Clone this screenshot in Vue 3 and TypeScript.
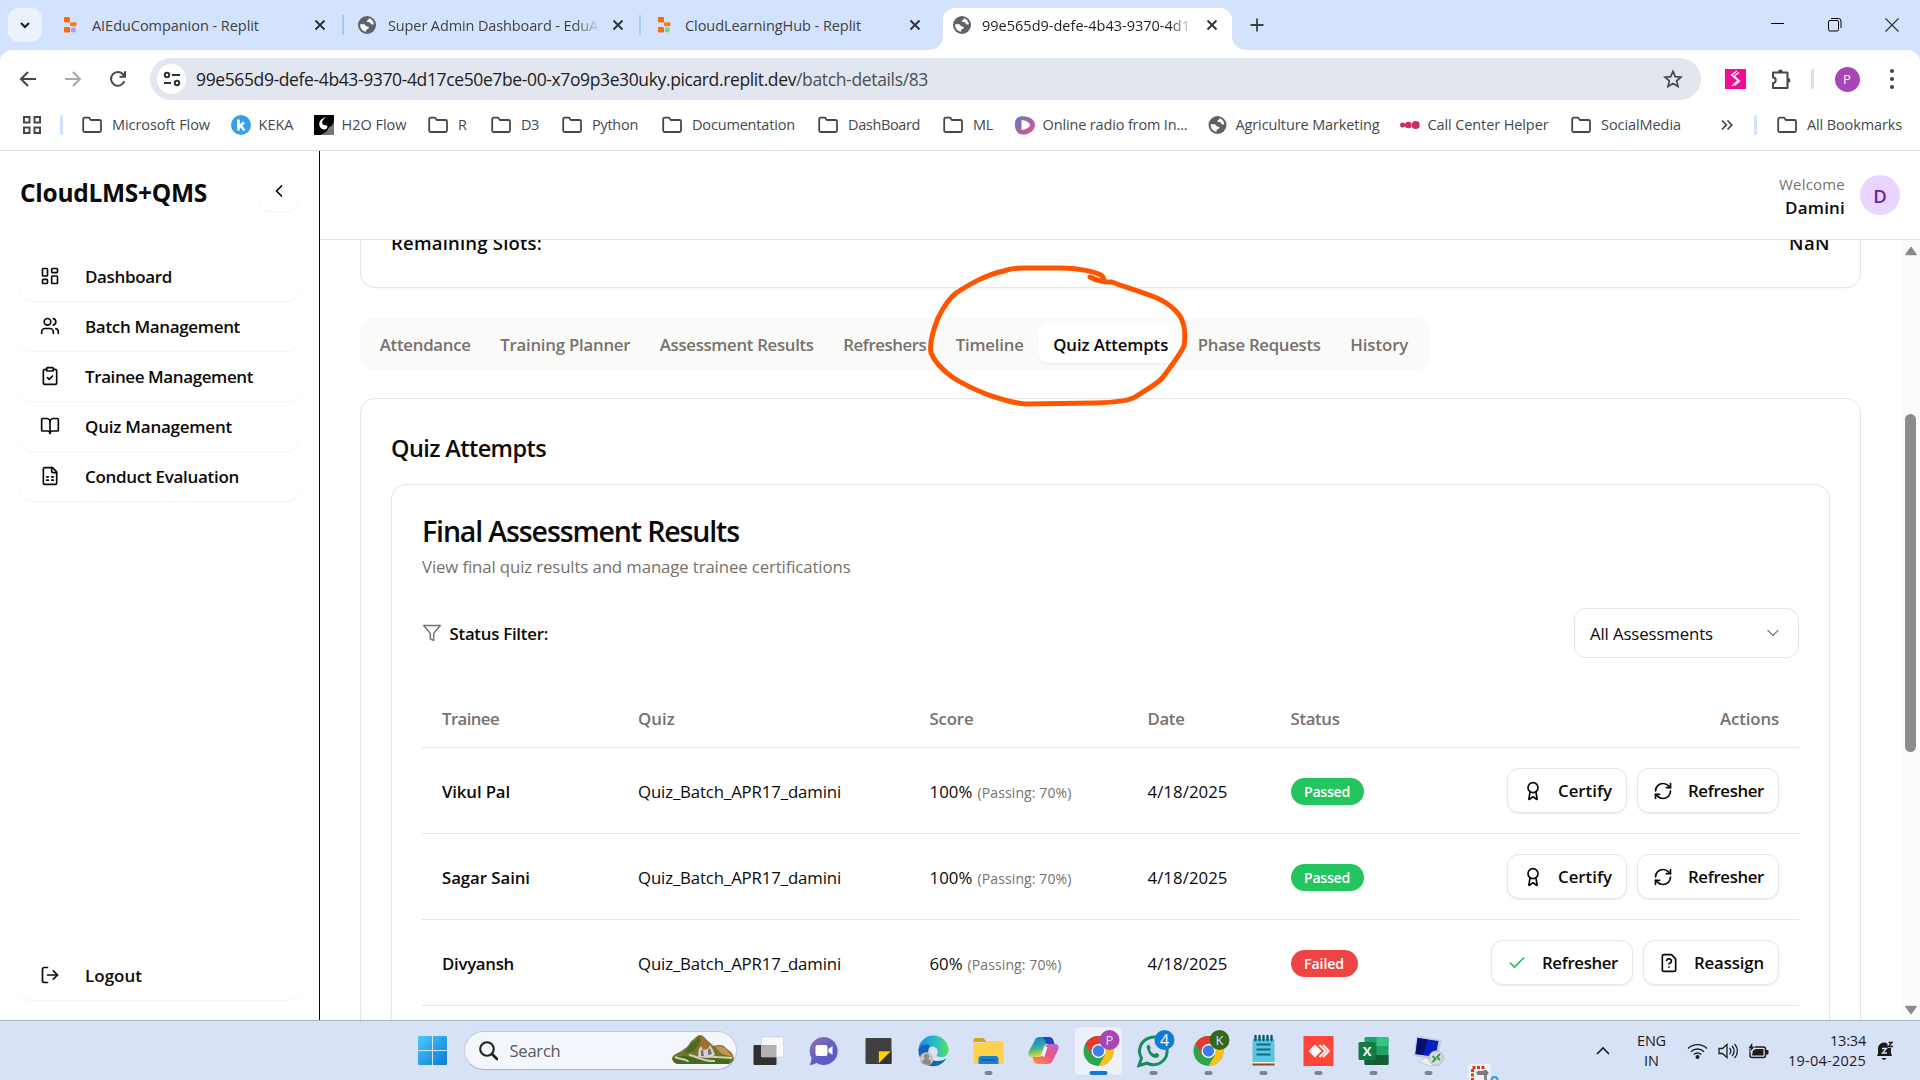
<script setup lang="ts">
import type { Directive } from 'vue'

// Spreads or tightens a label so that it occupies the given width in pixels.
const vFit: Directive<HTMLElement, number> = {
  mounted(el, { value }) {
    const count = (el.textContent ?? '').length
    if (!count || !value) return
    const natural = el.getBoundingClientRect().width
    el.style.letterSpacing = `${((value - natural) / count).toFixed(3)}px`
  },
}

interface BrowserTab { title: string; icon: 'replit' | 'globe'; dot?: string; fit: number; kind: string; fade?: boolean }
const browserTabs: BrowserTab[] = [
  { title: 'AIEduCompanion - Replit', icon: 'replit', dot: '#b79cf7', fit: 167, kind: 'first' },
  { title: 'Super Admin Dashboard - EduA', icon: 'globe', fit: 210, kind: 'second', fade: true },
  { title: 'CloudLearningHub - Replit', icon: 'replit', dot: '#6fd98a', fit: 176, kind: 'third' },
  { title: '99e565d9-defe-4b43-9370-4d1', icon: 'globe', fit: 208, kind: 'active', fade: true },
]

interface Bookmark { label: string; icon: 'folder' | 'keka' | 'h2o' | 'radio' | 'globe' | 'dots'; fit: number; slot: number }
const bookmarks: Bookmark[] = [
  { label: 'Microsoft Flow', icon: 'folder', fit: 98, slot: 149 },
  { label: 'KEKA', icon: 'keka', fit: 35, slot: 83 },
  { label: 'H2O Flow', icon: 'h2o', fit: 65, slot: 114 },
  { label: 'R', icon: 'folder', fit: 9, slot: 63 },
  { label: 'D3', icon: 'folder', fit: 18, slot: 71 },
  { label: 'Python', icon: 'folder', fit: 46, slot: 100 },
  { label: 'Documentation', icon: 'folder', fit: 103, slot: 156 },
  { label: 'DashBoard', icon: 'folder', fit: 72, slot: 125 },
  { label: 'ML', icon: 'folder', fit: 20, slot: 72 },
  { label: 'Online radio from In...', icon: 'radio', fit: 145, slot: 193 },
  { label: 'Agriculture Marketing', icon: 'globe', fit: 144, slot: 192 },
  { label: 'Call Center Helper', icon: 'dots', fit: 121, slot: 171 },
  { label: 'SocialMedia', icon: 'folder', fit: 80, slot: 150 },
]

const glyphs: Record<string, string[]> = {
  dashboard: ['M4 3h4a1 1 0 0 1 1 1v7a1 1 0 0 1-1 1H4a1 1 0 0 1-1-1V4a1 1 0 0 1 1-1z', 'M15 3h5a1 1 0 0 1 1 1v3a1 1 0 0 1-1 1h-5a1 1 0 0 1-1-1V4a1 1 0 0 1 1-1z', 'M15 12h5a1 1 0 0 1 1 1v7a1 1 0 0 1-1 1h-5a1 1 0 0 1-1-1v-7a1 1 0 0 1 1-1z', 'M4 16h4a1 1 0 0 1 1 1v3a1 1 0 0 1-1 1H4a1 1 0 0 1-1-1v-3a1 1 0 0 1 1-1z'],
  users: ['M16 21v-2a4 4 0 0 0-4-4H6a4 4 0 0 0-4 4v2', 'M9 3a4 4 0 1 0 0 8a4 4 0 1 0 0-8', 'M22 21v-2a4 4 0 0 0-3-3.87', 'M16 3.13a4 4 0 0 1 0 7.75'],
  clipboard: ['M9 2h6a1 1 0 0 1 1 1v2a1 1 0 0 1-1 1H9a1 1 0 0 1-1-1V3a1 1 0 0 1 1-1z', 'M16 4h2a2 2 0 0 1 2 2v14a2 2 0 0 1-2 2H6a2 2 0 0 1-2-2V6a2 2 0 0 1 2-2h2', 'm9 14 2 2 4-4'],
  book: ['M12 7v14', 'M3 18a1 1 0 0 1-1-1V4a1 1 0 0 1 1-1h5a4 4 0 0 1 4 4 4 4 0 0 1 4-4h5a1 1 0 0 1 1 1v13a1 1 0 0 1-1 1h-6a3 3 0 0 0-3 3 3 3 0 0 0-3-3z'],
  sheet: ['M15 2H6a2 2 0 0 0-2 2v16a2 2 0 0 0 2 2h12a2 2 0 0 0 2-2V7Z', 'M14 2v4a2 2 0 0 0 2 2h4', 'M8 13h2', 'M14 13h2', 'M8 17h2', 'M14 17h2'],
  logout: ['M9 21H5a2 2 0 0 1-2-2V5a2 2 0 0 1 2-2h4', 'm16 17 5-5-5-5', 'M21 12H9'],
  left: ['m15 18-6-6 6-6'],
  down: ['m6 9 6 6 6-6'],
  filter: ['M22 3H2l8 9.46V19l4 2v-8.54L22 3z'],
  award: ['M12 2a6 6 0 1 0 0 12a6 6 0 1 0 0-12', 'm15.477 12.89 1.515 8.526a.5.5 0 0 1-.81.47l-3.58-2.687a1 1 0 0 0-1.197 0l-3.586 2.686a.5.5 0 0 1-.81-.469l1.514-8.526'],
  refresh: ['M3 12a9 9 0 0 1 9-9 9.75 9.75 0 0 1 6.74 2.74L21 8', 'M21 3v5h-5', 'M21 12a9 9 0 0 1-9 9 9.75 9.75 0 0 1-6.74-2.74L3 16', 'M8 16H3v5'],
  check: ['M20 6 9 17l-5-5'],
  question: ['M15 2H6a2 2 0 0 0-2 2v16a2 2 0 0 0 2 2h12a2 2 0 0 0 2-2V7z', 'M12 17h.01', 'M9.1 9a3 3 0 0 1 5.82 1c0 2-3 3-3 3'],
}

const nav = [
  { label: 'Dashboard', icon: 'dashboard', fit: 87 },
  { label: 'Batch Management', icon: 'users', fit: 155 },
  { label: 'Trainee Management', icon: 'clipboard', fit: 168 },
  { label: 'Quiz Management', icon: 'book', fit: 147 },
  { label: 'Conduct Evaluation', icon: 'sheet', fit: 154 },
]

const sections = [
  { label: 'Attendance', fit: 91 },
  { label: 'Training Planner', fit: 130 },
  { label: 'Assessment Results', fit: 154 },
  { label: 'Refreshers', fit: 83 },
  { label: 'Timeline', fit: 68 },
  { label: 'Quiz Attempts', fit: 115, active: true },
  { label: 'Phase Requests', fit: 123 },
  { label: 'History', fit: 58 },
]

interface Action { label: string; icon: string; fit: number; green?: boolean }
interface Row { name: string; nameFit: number; score: string; scoreFit: number; passed: boolean; actions: Action[] }
const certify: Action = { label: 'Certify', icon: 'award', fit: 54 }
const refresher: Action = { label: 'Refresher', icon: 'refresh', fit: 76 }
const rows: Row[] = [
  { name: 'Vikul Pal', nameFit: 68, score: '100%', scoreFit: 43, passed: true, actions: [certify, refresher] },
  { name: 'Sagar Saini', nameFit: 88, score: '100%', scoreFit: 43, passed: true, actions: [certify, refresher] },
  { name: 'Divyansh', nameFit: 72, score: '60%', scoreFit: 33, passed: false, actions: [
    { label: 'Refresher', icon: 'check', fit: 76, green: true },
    { label: 'Reassign', icon: 'question', fit: 70 },
  ] },
]
</script>

<template>
  <div class="screen">
    <header class="tabstrip">
      <div class="tab-search"><svg width="14" height="14" viewBox="0 0 14 14"><path d="M3 5l4 4 4-4" fill="none" stroke="#1f1f1f" stroke-width="2.2" /></svg></div>
      <div v-for="t in browserTabs" :key="t.title" class="btab" :class="t.kind">
        <svg v-if="t.icon === 'replit'" class="fav" width="18" height="18" viewBox="0 0 18 18">
          <rect x="2" y="1" width="6" height="5.5" rx="1" fill="#fb6a0b" /><rect x="8" y="6.2" width="6.5" height="4" rx="1" fill="#fb7a28" />
          <rect x="2" y="11" width="6" height="5.5" rx="1" fill="#fb6a0b" /><circle cx="11.3" cy="13.8" r="2.6" :fill="t.dot" />
        </svg>
        <svg v-else class="fav" width="18" height="18" viewBox="0 0 18 18">
          <g id="globeMark"><circle cx="9" cy="9" r="9" fill="#5f6368" /><path d="M10.800 2.300A7 7 0 0 1 15.800 8.300C14 9 12.800 8.200 12.300 7 11.500 5.800 9.400 7 8.900 5.600 8.500 4.300 11 4.200 10.800 2.300zM2.100 8.300H5.500C7.800 8.300 7.300 10.600 9.500 10.600 11.800 10.700 11 13 9 13.200 8 13.400 8.300 14.800 8 15.800A7 7 0 0 1 2.100 8.300z" fill="#fff" /></g>
        </svg>
        <div class="btitle" :class="{ fade: t.fade }"><span v-fit="t.fit">{{ t.title }}</span></div>
        <svg class="x" width="12" height="12" viewBox="0 0 12 12"><path d="M1.500 1.500l9 9m0-9l-9 9" stroke="#303236" stroke-width="1.900" /></svg>
      </div>
      <svg class="plus" width="14" height="14" viewBox="0 0 14 14"><path d="M7 .5v13M.5 7h13" stroke="#3c4043" stroke-width="1.800" /></svg>
      <div class="winbtns">
        <svg width="14" height="14" viewBox="0 0 14 14"><path d="M0 5.500h13" stroke="#000" /></svg>
        <svg width="14" height="14" viewBox="0 0 14 14"><rect x=".5" y="2.500" width="10" height="10.500" rx="1.500" fill="none" stroke="#000" /><path d="M3 .5h7.500a2.500 2.500 0 0 1 2.500 2.500V10" fill="none" stroke="#000" /></svg>
        <svg width="14" height="14" viewBox="0 0 14 14"><path d="M.5.500l13 13m0-13l-13 13" stroke="#333" stroke-width="1.200" /></svg>
      </div>
    </header>

    <div class="toolbar">
      <div class="navbtns">
        <svg width="18" height="18" viewBox="0 0 18 18"><path d="M17 9H2.500M9 2L2 9l7 7" fill="none" stroke="#474747" stroke-width="2" /></svg>
        <svg width="18" height="18" viewBox="0 0 18 18"><path d="M1 9h14.500M9 2l7 7-7 7" fill="none" stroke="#a9a9ab" stroke-width="2" /></svg>
        <svg width="18" height="18" viewBox="0 0 18 18"><path d="M15.400 11.200A6.900 6.900 0 1 1 14.300 4.500L16 6.500M16 1.300V6.800H10.500" fill="none" stroke="#474747" stroke-width="2" /></svg>
      </div>
      <div class="omnibox">
        <div class="site"><svg width="18" height="18" viewBox="0 0 18 18"><g fill="none" stroke="#303236" stroke-width="2"><circle cx="4" cy="5" r="2.200" /><path d="M9 5h8M1 13h7" /><circle cx="14" cy="13" r="2.200" /></g></svg></div>
        <span class="url"><span v-fit="600">99e565d9-defe-4b43-9370-4d17ce50e7be-00-x7o9p3e30uky.picard.replit.dev</span><span v-fit="132" class="path">/batch-details/83</span></span>
        <svg class="star" width="20" height="20" viewBox="0 0 20 20"><path d="M10 2.300l2.300 5.300 5.700.5-4.300 3.800 1.300 5.600-5-3-5 3 1.300-5.600L2 8.100l5.700-.5z" fill="none" stroke="#474747" stroke-width="1.700" /></svg>
      </div>
      <svg class="ext" width="21" height="20" viewBox="0 0 21 20"><rect width="21" height="20" fill="#f50a94" /><g fill="none" stroke="#fff" stroke-width="1.300"><path d="M12 2L6.500 6l6.500 5.500-6 5.500M14 3.500L9 7l5.500 5-5 4.500" /></g></svg>
      <svg class="puzzle" width="22" height="22" viewBox="0 0 22 22"><path d="M3 4.500H17.500V20H3v-5c3.600 0 3.600-5.500 0-5.500z" fill="none" stroke="#474747" stroke-width="2" stroke-linejoin="round" /><path d="M8 4a2.400 2.400 0 0 1 4.800 0zM18 10a2.400 2.400 0 0 1 0 4.800z" fill="#474747" /></svg>
      <i class="vsep"></i>
      <div class="profile">P</div>
      <svg class="kebab" width="6" height="22" viewBox="0 0 6 22"><g fill="#474747"><circle cx="3" cy="3" r="2.100" /><circle cx="3" cy="11" r="2.100" /><circle cx="3" cy="19" r="2.100" /></g></svg>
    </div>

    <div class="bookmarks">
      <svg class="apps" width="18" height="18" viewBox="0 0 18 18"><g fill="none" stroke="#474747" stroke-width="2"><rect x="1" y="1" width="5.500" height="5.500" /><rect x="11.500" y="1" width="5.500" height="5.500" /><rect x="1" y="11.500" width="5.500" height="5.500" /><rect x="11.500" y="11.500" width="5.500" height="5.500" /></g></svg>
      <i class="vsep"></i>
      <div class="marks">
        <div v-for="b in bookmarks" :key="b.label" class="mark" :class="b.icon" :style="{ width: b.slot + 'px' }">
          <svg width="20" height="20" viewBox="0 0 20 20">
            <path v-if="b.icon === 'folder'" d="M1.200 4.200a1.500 1.500 0 0 1 1.500-1.500H7l2 2.300h8.500A1.500 1.500 0 0 1 19 6.500v9a1.500 1.500 0 0 1-1.500 1.500H2.700a1.500 1.500 0 0 1-1.500-1.500z" fill="none" stroke="#474747" stroke-width="1.800" />
            <g v-else-if="b.icon === 'keka'"><circle cx="10" cy="10" r="10" fill="#35a0e8" /><path d="M7.500 4.500v11M13 7.500l-5 4.200M9.500 10.500l4 5" stroke="#fff" stroke-width="2.600" /></g>
            <g v-else-if="b.icon === 'h2o'"><rect width="20" height="20" fill="#000" /><path d="M6 20h14V6c-1 6-5 5-6 8s-5 5-8 6z" fill="#777" /><path d="M12 2C5 4 3 10 8 14c5 2 7-3 4-4-3 1-5-2-3-5z" fill="#fff" /></g>
            <g v-else-if="b.icon === 'radio'"><path d="M2 3C7-1 20 2 20 10S8 22 3 18C-1 14-1 6 2 3z" fill="url(#radioFill)" /><path d="M6.500 5c4 0 8.500 3 8.500 5s-4.500 5-8.500 5z" fill="#fff" /></g>
            <use v-else-if="b.icon === 'globe'" href="#globeMark" x=".5" y="1" />
            <g v-else fill="#cf2a63"><circle cx="2.600" cy="10" r="2.500" /><circle cx="8.300" cy="10" r="3.300" /><circle cx="15.700" cy="10" r="4" /></g>
            <defs><linearGradient id="radioFill" x1="0" y1="0" x2="1" y2="1"><stop offset="0" stop-color="#5b7cc9" /><stop offset="1" stop-color="#ef4f7d" /></linearGradient></defs>
          </svg>
          <span v-fit="b.fit">{{ b.label }}</span>
        </div>
      </div>
      <svg class="more" width="12" height="12" viewBox="0 0 12 12"><path d="M1 1.500L5.300 6 1 10.500M6.500 1.500L10.800 6l-4.300 4.500" fill="none" stroke="#474747" stroke-width="1.800" /></svg>
      <i class="vsep late"></i>
      <div class="mark folder"><svg width="20" height="20" viewBox="0 0 20 20"><path d="M1.200 4.200a1.500 1.500 0 0 1 1.500-1.500H7l2 2.300h8.500A1.500 1.500 0 0 1 19 6.500v9a1.500 1.500 0 0 1-1.500 1.500H2.700a1.500 1.500 0 0 1-1.500-1.500z" fill="none" stroke="#474747" stroke-width="1.800" /></svg><span v-fit="95">All Bookmarks</span></div>
    </div>

    <div class="page">
      <aside class="sidebar">
        <div class="brand"><h1 v-fit="187">CloudLMS+QMS</h1><button class="collapse"><svg class="ico" viewBox="0 0 24 24"><path :d="glyphs.left[0]" /></svg></button></div>
        <nav>
          <a v-for="n in nav" :key="n.label" class="navitem"><svg class="ico" viewBox="0 0 24 24"><path v-for="d in glyphs[n.icon]" :key="d" :d="d" /></svg><span v-fit="n.fit">{{ n.label }}</span></a>
        </nav>
        <a class="navitem logout"><svg class="ico" viewBox="0 0 24 24"><path v-for="d in glyphs.logout" :key="d" :d="d" /></svg><span v-fit="57">Logout</span></a>
      </aside>

      <div class="workspace">
        <div class="topbar">
          <div class="who"><span v-fit="66" class="hello">Welcome</span><span v-fit="60" class="user">Damini</span></div>
          <div class="avatar">D</div>
        </div>
        <div class="scroller">
          <main>
            <section class="card slots"><span v-fit="151">Remaining Slots:</span><span v-fit="41">NaN</span></section>
            <div class="sections">
              <div v-for="s in sections" :key="s.label" class="section" :class="{ active: s.active }"><span v-fit="s.fit">{{ s.label }}</span></div>
            </div>
            <section class="card attempts">
              <h2><span v-fit="155">Quiz Attempts</span></h2>
              <div class="card results">
                <h3><span v-fit="317">Final Assessment Results</span></h3>
                <p><span v-fit="428.500">View final quiz results and manage trainee certifications</span></p>
                <div class="filterbar">
                  <svg class="ico funnel" viewBox="0 0 24 24"><path :d="glyphs.filter[0]" /></svg>
                  <span v-fit="98.500" class="flabel">Status Filter:</span>
                  <div class="select"><span v-fit="123">All Assessments</span><svg class="ico" viewBox="0 0 24 24"><path :d="glyphs.down[0]" /></svg></div>
                </div>
                <div class="grid head">
                  <div><span v-fit="57">Trainee</span></div><div><span v-fit="37">Quiz</span></div><div><span v-fit="44">Score</span></div><div><span v-fit="37">Date</span></div><div><span v-fit="49">Status</span></div><div class="right"><span v-fit="59">Actions</span></div>
                </div>
                <div v-for="r in rows" :key="r.name" class="grid row">
                  <div class="name"><span v-fit="r.nameFit">{{ r.name }}</span></div>
                  <div><span v-fit="203">Quiz_Batch_APR17_damini</span></div>
                  <div class="score"><span v-fit="r.scoreFit">{{ r.score }}</span><small v-fit="94">(Passing: 70%)</small></div>
                  <div><span v-fit="80">4/18/2025</span></div>
                  <div><b class="badge" :class="{ bad: !r.passed }"><span v-fit="r.passed ? 46 : 40">{{ r.passed ? 'Passed' : 'Failed' }}</span></b></div>
                  <div class="right actions">
                    <button v-for="a in r.actions" :key="a.label" class="act"><svg class="ico" :class="{ green: a.green }" viewBox="0 0 24 24"><path v-for="d in glyphs[a.icon]" :key="d" :d="d" /></svg><span v-fit="a.fit">{{ a.label }}</span></button>
                  </div>
                </div>
              </div>
            </section>
          </main>
          <div class="scrollbar">
            <svg width="12" height="10" viewBox="0 0 12 10"><path d="M6 1.500L11 8.500H1z" fill="#8b8b8b" stroke="#8b8b8b" stroke-width="1.500" stroke-linejoin="round" /></svg>
            <div class="thumb"></div>
            <svg class="end" width="12" height="10" viewBox="0 0 12 10"><path d="M6 8.500L11 1.500H1z" fill="#8b8b8b" stroke="#8b8b8b" stroke-width="1.500" stroke-linejoin="round" /></svg>
          </div>
        </div>
      </div>
    </div>

    <svg class="scribble" width="280" height="160" viewBox="920 256 280 160"><path d="M1090 277C1097 281 1103 282 1112 282C1124 287 1143 292 1157 298C1168 303 1175 309 1180 316Q1187 328 1184 346C1180 355 1171 366 1163 377C1158 384 1144 391 1135 397Q1127 402 1096 403L1025 404C1012 403 998 398 986 394Q966 386 952 377Q936 365 931 353C929 342 934 328 938 318Q947 300 956 293C970 284 985 275 1004 271Q1010 268 1025 268L1060 268C1080 268 1095 272 1101 275Q1104 277 1104 281" /></svg>

    <footer class="taskbar">
      <svg class="start" width="29" height="29" viewBox="0 0 29 29"><defs><linearGradient id="winFill" x1="0" y1="0" x2="1" y2="1" gradientUnits="objectBoundingBox"><stop offset="0" stop-color="#4ccbfb" /><stop offset="1" stop-color="#0a78d6" /></linearGradient></defs><path d="M1 0h13v14H0V1q0-1 1-1M15 0h13q1 0 1 1v13H15zM0 15h14v14H1q-1 0-1-1zM15 15h14v13q0 1-1 1H15z" fill="url(#winFill)" /></svg>
      <div class="search">
        <svg width="19" height="20" viewBox="0 0 19 20"><circle cx="8" cy="8" r="6.800" fill="none" stroke="#222" stroke-width="2.100" /><path d="M13 13l5 5" stroke="#222" stroke-width="2.700" stroke-linecap="round" /></svg>
        <span v-fit="51">Search</span>
        <svg class="hills" width="63" height="31" viewBox="0 0 63 31">
          <path d="M1 25C0 19 9 18 13 14c5-2 5-7 10-10 4-4 6-5 9-3 4 4 8 8 11 10 5-1 8-2 12 2 3 3 5 3 7 7 2 5 0 8-4 9H8c-4 0-6-2-7-5" fill="#72762a" />
          <path d="M30 1c5 3 9 9 12 12l-8 7-8-2c4-5 5-11 4-17" fill="#a86c35" /><path d="M20 8c3 0 7-5 9-7 0 7-3 11-6 15l-9 3c1-5 4-8 6-11" fill="#4c6b20" /><path d="M44 12c5-2 9 0 11 2l7 8-11-3z" fill="#c49350" />
          <path d="M2 24c7-5 14-3 22-1s18-3 36 1l-3 5H10c-5 0-7-2-8-5" fill="#426c24" /><path d="M4 22c6 3 13 2 13 5M18 20c7 1 15 7 26 6M29 20c8 3 17 1 32 3" fill="none" stroke="#d8cda8" stroke-width="2" />
          <path d="M27 22l1-8 2-3 2 4 5-1 2-4 3 5 2 5-7 3z" fill="#d9d2cc" /><path d="M30 21v-6l2 0 1 6M37 20v-5l2-2 2 6" fill="#777076" />
        </svg>
      </div>
      <div class="apps-row">
        <svg viewBox="-27.500 -30 55 60"><rect x="-15" y="-6" width="23" height="20" rx="1" fill="#303030" /><rect x="-7" y="-14" width="22" height="20" rx="1" fill="#f7f8fa" stroke="#ccd0d5" stroke-width=".6" /><rect x="-7" y="-6" width="15" height="12" fill="#b0b1b3" /></svg>
        <svg viewBox="-27.500 -30 55 60"><defs><linearGradient id="chatFill" x1="0" y1="0" x2="1" y2="1"><stop offset="0" stop-color="#a16faa" /><stop offset=".5" stop-color="#6260c2" /><stop offset="1" stop-color="#5a54c8" /></linearGradient></defs><path d="M0-14A14 14 0 1 1-7 12Q-10 14-14 14Q-12 11-12 7A14 14 0 0 1 0-14" fill="url(#chatFill)" /><rect x="-8" y="-6" width="12" height="11" rx="2" fill="#fff" /><path d="M5-2l4-3v9l-4-3z" fill="#fff" /></svg>
        <svg viewBox="-27.500 -30 55 60"><rect x="-13" y="-13" width="26" height="26" rx="1" fill="#404040" /><path d="M0 13V0h13z" fill="#ffd600" stroke="#222" stroke-width=".5" /><path d="M0 13L13 0v12q0 1-1 1z" fill="#333" /></svg>
        <svg viewBox="-27.500 -30 55 60"><defs><linearGradient id="edgeFill" x1="0" y1="0" x2="1" y2="0"><stop offset="0" stop-color="#1a8ade" /><stop offset=".5" stop-color="#24b7d5" /><stop offset="1" stop-color="#58e15c" /></linearGradient></defs><path d="M-15 0A15 15 0 0 1 15-1C15 7 7 7 3 5C7-2 1-6-4-4S-12 4-15 0" fill="url(#edgeFill)" /><path d="M-15 0C-15-6-7-8-3-5C-8 0-4 11 4 10Q10 10 13 7C8 16-2 17-8 13Q-15 8-15 0" fill="#1165b7" /><circle cx="-7" cy="8" r="6.800" fill="#c9c6c2" /><circle cx="-7" cy="5.500" r="2.700" fill="#8c8986" /><path d="M-11.500 12q0-4 4.500-4t4.500 4-9 0" fill="#8c8986" /></svg>
        <svg viewBox="-27.500 -30 55 60"><path d="M-15-11q0-2 2-2h8l3 4h-13z" fill="#dfa008" /><path d="M-15-8H-4l2-2h15q2 0 2 2v19q0 2-2 2h-26q-2 0-2-2z" fill="#ffd149" /><path d="M-10 13V8q0-3 3-3H7q3 0 3 3v5z" fill="#1681ce" /><path d="M-7 9H7" stroke="#0b4f92" stroke-width="1.200" /><rect class="dot" x="-4" y="20" width="8" height="4" rx="2" /></svg>
        <svg viewBox="-27.500 -30 55 60"><defs><linearGradient id="coA" x1="0" y1="0" x2=".3" y2="1"><stop offset="0" stop-color="#1c74e8" /><stop offset=".55" stop-color="#2daf9a" /><stop offset="1" stop-color="#e7d638" /></linearGradient><linearGradient id="coB" x1="0" y1="1" x2="1" y2="0"><stop offset="0" stop-color="#fa9a3c" /><stop offset=".5" stop-color="#f4547d" /><stop offset="1" stop-color="#ae67df" /></linearGradient></defs><path d="M-9-10q1-4 5-4h9q4 0 5 4l1 3H4q-3 0-4 4l-2 6q-1 3-4 3h-5q-5 0-4-5z" fill="url(#coA)" /><path d="M-1-14h6q4 0 5 4l1 3H5q-3 0-3-3z" fill="#1749c1" /><path d="M9 10q-1 3-5 3h-9q-4 0-5-3l-1-4h6q4 0 5-4l2-6q1-3 4-3h5q5 0 4 5z" fill="url(#coB)" /><path d="M-2 5l3-9h3L1 6z" fill="#eef1fb" /></svg>
        <svg viewBox="-27.500 -30 55 60"><rect x="-24" y="-24" width="48" height="48" rx="4" fill="#edf1fb" stroke="#d5dcef" stroke-width=".7" /><g id="chromeMark"><circle r="15" fill="#2da44e" /><path d="M0-15A15 15 0 0 0-13-7.500L-6.500 4 0-7H13A15 15 0 0 0 0-15" fill="#e33b2e" /><path d="M13-7.500H0L6.500 4 0 15A15 15 0 0 0 13-7.500" fill="#fbc116" /><circle r="7" fill="#fff" /><circle r="5.700" fill="#3b7ded" /></g><circle cx="11" cy="-11" r="10" fill="#a845b8" /><text class="btxt pale" x="11" y="-6">P</text><rect x="-9" y="20" width="18" height="4" rx="2" fill="#0f7bd8" /></svg>
        <svg viewBox="-27.500 -30 55 60"><path d="M-14.500 14.500L-12 7A13.800 13.800 0 1 1-6.500 12.200z" fill="none" stroke="#168d5b" stroke-width="3" /><path d="M-7-4q2-5 4 0l0 2q-1 1 0 2 2 3 4 3l2-1q4 1 2 4Q-3 10-7-4" fill="#168d5b" /><circle cx="11" cy="-11" r="10" fill="#0f7bd8" /><text class="btxt four" x="11" y="-5.500">4</text><rect class="dot" x="-4" y="20" width="8" height="4" rx="2" /></svg>
        <svg viewBox="-27.500 -30 55 60"><use href="#chromeMark" /><circle cx="11" cy="-11" r="10" fill="#33691e" /><text class="btxt pale" x="11" y="-6">K</text><rect class="dot" x="-4" y="20" width="8" height="4" rx="2" /></svg>
        <svg viewBox="-27.500 -30 55 60"><rect x="-11" y="-12" width="22" height="25" rx="1.500" fill="#5cc5dd" /><path d="M-8-15v4M-4-15v4M0-15v4M4-15v4M8-15v4" stroke="#0d5670" stroke-width="2.400" stroke-linecap="round" /><path d="M-7-6.500H7M-7-1.500H7M-7 3.500H7" stroke="#126984" stroke-width="1.800" /><path d="M-11 11h22v2h-22z" fill="#f5efe6" /><path d="M-11 13.500h22" stroke="#8c4b16" stroke-width="2" /><rect class="dot" x="-4" y="20" width="8" height="4" rx="2" /></svg>
        <svg viewBox="-27.500 -30 55 60"><rect x="-15" y="-15" width="30" height="30" fill="#ff4438" /><path d="M-10 0l6.500-6.500L3 0l-6.500 6.500z" fill="#fff" /><path d="M1-6l6 6-6 6M4.500-6l6 6-6 6" fill="none" stroke="#fff" stroke-width="1.900" /><rect class="dot" x="-4" y="20" width="8" height="4" rx="2" /></svg>
        <svg viewBox="-27.500 -30 55 60"><rect x="-9" y="-14" width="24" height="28" rx="1.500" fill="#21a366" /><path d="M3-14h10.500q1.500 0 1.500 1.500V-5H3z" fill="#33c481" /><path d="M-9-5H3V4H-9z" fill="#107c41" /><path d="M-9 4h24v8.500q0 1.500-1.500 1.500h-21q-1.500 0-1.500-1.500z" fill="#185c37" /><rect x="-15" y="-9" width="17" height="18" rx="1.500" fill="#107c41" /><text class="btxt xl" x="-6.500" y="4.500">X</text><rect class="dot" x="-4" y="20" width="8" height="4" rx="2" /></svg>
        <svg viewBox="-27.500 -30 55 60"><path d="M-9 11l5-4 12 2 2 5-9 1z" fill="#eee" stroke="#aaa" stroke-width=".5" /><path d="M-12-15L13-11 9 9-15 5z" fill="#c5cbdc" /><path d="M-11-13L10-10 7 6-13 3z" fill="#0a1fc0" /><path d="M-11-13L-1-11.500-5 4-13 3z" fill="#07106b" /><circle cx="7.500" cy="7" r="7.300" fill="#d7dad8" stroke="#999" stroke-width=".5" /><path d="M4 5l3 3-3 3M11.500 3L8.500 6l3 3" fill="none" stroke="#2e9b46" stroke-width="1.800" /><rect class="dot" x="-4" y="20" width="8" height="4" rx="2" /></svg>
        <svg viewBox="-27.500 -30 55 60"><rect x="-15" y="13" width="22" height="22" rx="2" fill="#f1f1f1" /><path d="M-11 30V16.500H1" fill="none" stroke="#d83b16" stroke-width="3" stroke-dasharray="3 1.500" /><path d="M2 19v11" stroke="#888" stroke-width="3" /><rect x="-7" y="20" width="12" height="4" rx="2" fill="#77797f" /><circle cx="11" cy="29" r="3" fill="none" stroke="#2c9ddd" stroke-width="2" /></svg>
      </div>
      <svg class="chev" width="14" height="10" viewBox="0 0 14 10"><path d="M1 8l6-6 6 6" fill="none" stroke="#222" stroke-width="1.700" /></svg>
      <div class="lang"><span v-fit="29">ENG</span><span>IN</span></div>
      <svg class="wifi" width="21" height="18" viewBox="0 0 21 18"><g fill="none" stroke="#1d1d1d" stroke-width="1.400"><path d="M1 6.500a13.500 13.500 0 0 1 19 0M4 9.700a9.300 9.300 0 0 1 13 0M6.800 12.600a5.200 5.200 0 0 1 7.400 0" /></g><circle cx="10.500" cy="15" r="2" fill="#1d1d1d" /></svg>
      <svg class="vol" width="21" height="18" viewBox="0 0 21 18"><g fill="none" stroke="#1d1d1d" stroke-width="1.300"><path d="M1 6.500h3.500L9 2.500v13l-4.500-4H1zM11.500 6a4 4 0 0 1 0 6M14 4a7 7 0 0 1 0 10M16.500 2a10 10 0 0 1 0 14" /></g></svg>
      <svg class="bat" width="21" height="18" viewBox="0 0 21 18"><rect x="2" y="5" width="15.500" height="10.500" rx="2" fill="none" stroke="#1d1d1d" stroke-width="1.500" /><path d="M5 8.500L8 7h7.500v6.500H4z" fill="#1d1d1d" /><path d="M18 8h1.500q1 0 1 1v2.500q0 1-1 1H18z" fill="#1d1d1d" /><path d="M4.500 0L0 6.500h2.500L2 10.500 7 4.500H4.500z" fill="#1d1d1d" stroke="#d8e3f5" stroke-width=".6" /></svg>
      <div class="clock"><span v-fit="36">13:34</span><span v-fit="78">19-04-2025</span></div>
      <svg class="bell" width="18" height="20" viewBox="0 0 18 20"><path d="M2 13V8a6 6 0 0 1 9-5.500h4V12l1 3H1z" fill="#1b1b1b" /><path d="M5.500 17h5q-2.500 4-5 0" fill="#1b1b1b" /><path d="M6 7.500h4.500L6.500 12h4.500" fill="none" stroke="#dbe5f6" stroke-width="1.300" /><path d="M11 0h7v7h-6z" fill="#d8e3f5" /><path d="M12.500 1.500H16l-3.500 4H17" fill="none" stroke="#1b1b1b" stroke-width="1.300" /></svg>
    </footer>
  </div>
</template>

<style>
body { margin: 0; overflow: hidden; background: #fff; }
</style>

<style scoped>
* { box-sizing: border-box; }
.screen { position: relative; width: 1920px; height: 1080px; overflow: hidden; display: flex; flex-direction: column; font-family: "Open Sans", "Noto Sans", sans-serif; color: #0c0a09; background: #d3e3fd; }
span, small, h1 { white-space: pre; }
svg { display: block; flex: none; }

.tabstrip { height: 50px; flex: none; display: flex; align-items: center; padding-left: 8px; }
.tab-search { width: 34px; height: 34px; border-radius: 11px; background: #ebf2fe; display: grid; place-items: center; flex: none; }
.btab { height: 42px; align-self: flex-end; display: flex; align-items: center; flex: none; position: relative; padding-bottom: 8px; }
.btab .btitle { font-size: 14.5px; color: #3f4145; overflow: hidden; margin-left: 12px; padding-top: 2px; line-height: 24px; flex: none; }
.btitle span { display: inline-block; }
.btab.first { width: 302px; padding-left: 20px; }
.btab.first .btitle { width: 213px; }
.btab.second { width: 297px; padding-left: 14px; }
.btab.second .btitle { width: 212px; }
.btab.third { width: 302px; padding-left: 15px; }
.btab.third .btitle { width: 213px; margin-left: 11px; }
.btab.active { width: 289px; padding-left: 10px; background: #fff; border-radius: 12px 12px 0 0; }
.btab.active .btitle { width: 212px; margin-left: 11px; color: #1f1f1f; }
.btab .x { margin-left: 12px; }
.btab.first .x { margin-left: 9px; }
.btab.third .x { margin-left: 11px; }
.btab.first::after, .btab.second::after { content: ""; position: absolute; right: 0; top: 7px; width: 2px; height: 20px; background: #a8c7fa; }
.btab.active::before, .btab.active::after { content: ""; position: absolute; bottom: 0; width: 13px; height: 13px; }
.btab.active::before { left: -13px; background: radial-gradient(circle at 0 0, transparent 12.500px, #fff 13px); }
.btab.active::after { right: -13px; background: radial-gradient(circle at 100% 0, transparent 12.500px, #fff 13px); }
.fade { -webkit-mask-image: linear-gradient(90deg, #000 88%, transparent); mask-image: linear-gradient(90deg, #000 88%, transparent); }
.plus { margin-left: 18px; }
.winbtns { margin-left: auto; display: flex; gap: 43px; padding-right: 21.500px; }

.toolbar { height: 50px; flex: none; display: flex; align-items: center; padding: 8px 25px 0 19px; background: #fff; border-radius: 12px 12px 0 0; }
.navbtns { display: flex; gap: 27px; width: 131px; }
.omnibox { width: 1551px; height: 42px; border-radius: 21px; background: #e2e7ef; display: flex; align-items: center; padding-left: 7px; }
.site { width: 29px; height: 30px; border-radius: 50%; background: #fff; display: grid; place-items: center; }
.url { font-size: 17.500px; margin-left: 10px; color: #1f2023; line-height: 30px; display: flex; }
.url .path { color: #4b4e53; }
.star { margin-left: auto; margin-right: 18.500px; }
.ext { margin-left: 24px; }
.puzzle { margin-left: 24px; }
.vsep { width: 3px; height: 20px; background: #d3e3fd; border-radius: 1px; flex: none; margin-left: 19px; }
.profile { margin-left: 20.500px; width: 25px; height: 25px; border-radius: 50%; background: #a845b8; color: #fff; display: grid; place-items: center; font-size: 13px; }
.kebab { margin-left: auto; }

.bookmarks { height: 51px; flex: none; display: flex; align-items: center; padding-left: 23px; background: #fff; border-bottom: 1px solid #dcdcdc; }
.marks { display: flex; margin-left: 19px; }
.mark { display: flex; align-items: center; font-size: 14.500px; color: #46484c; line-height: 24px; flex: none; gap: 7.500px; }
.mark.folder { gap: 10px; }
.more { margin-left: 0; }
.bookmarks .apps + .vsep { margin-left: 19px; }
.vsep.late { margin-left: 21px; margin-right: 20px; }

.page { height: 869px; flex: none; display: flex; background: #fff; }
.sidebar { width: 320px; border-right: 1.500px solid #0a0a0a; display: flex; flex-direction: column; padding: 20px 20px 20px; flex: none; }
.brand { display: flex; justify-content: space-between; align-items: center; height: 40px; margin-bottom: 40px; }
.brand h1 { margin: 4px 0 0; font-size: 24.500px; font-weight: 700; line-height: 36px; }
.collapse { width: 40px; height: 40px; margin: 0; padding: 0; border: 0; background: #fff; border-radius: 12px; box-shadow: 0 1px 2px rgba(0,0,0,.06); display: grid; place-items: center; }
.ico { width: 20px; height: 20px; fill: none; stroke: currentColor; stroke-width: 2; stroke-linecap: round; stroke-linejoin: round; }
.navitem { height: 50px; display: flex; align-items: center; padding-left: 20px; border-radius: 12px; box-shadow: 0 1px 2px rgba(0,0,0,.05); font-size: 17px; font-weight: 600; }
.navitem span { margin-left: 25px; padding-top: 2px; line-height: 24px; }
.logout { margin-top: auto; height: 50px; flex: none; }
.workspace { flex: 1; min-width: 0; display: flex; flex-direction: column; }
.topbar { height: 89px; flex: none; border-bottom: 1px solid #e2e2e2; display: flex; justify-content: flex-end; align-items: center; padding-right: 20px; gap: 15px; }
.who { display: flex; flex-direction: column; align-items: flex-end; padding-top: 2px; }
.who span { line-height: 24px; }
.hello { font-size: 15px; color: #78716c; }
.user { font-size: 17px; font-weight: 600; }
.avatar { width: 40px; height: 40px; border-radius: 50%; background: #e9d5ff; color: #6b21a8; display: grid; place-items: center; font-size: 18.500px; font-weight: 600; }
.scroller { flex: 1; min-height: 0; display: flex; overflow: hidden; }
main { flex: 1; padding: 0 41px 0 40px; min-width: 0; height: 780px; overflow: hidden; }
.card { border: 1px solid #e6e5e4; border-radius: 15px; background: #fff; box-shadow: 0 1px 2px rgba(0,0,0,.03); }
.slots { height: 89px; margin-top: -41px; padding: 31px 30px 0; display: flex; justify-content: space-between; font-size: 18.500px; font-weight: 600; line-height: 24px; }
.sections { width: 1069px; height: 51px; margin-top: 30px; padding: 5px; background: #fafaf9; border-radius: 14px; display: flex; box-shadow: 0 1px 1px rgba(0,0,0,.03); }
.section { height: 40px; padding: 2px 14.750px 0; display: flex; align-items: center; flex: none; font-size: 16.800px; font-weight: 600; color: #78716c; border-radius: 10px; }
.section.active { background: #fff; color: #0c0a09; box-shadow: 0 1px 2px rgba(0,0,0,.06); }
.attempts { margin-top: 29px; padding: 31px 30px 0; height: 700px; }
h2, h3, p { margin: 0; }
h2 { font-size: 23.500px; font-weight: 600; line-height: 36px; height: 54px; }
.results { height: 620px; padding: 29px 30px 0 30px; }
h3 { font-size: 28.500px; font-weight: 600; line-height: 34px; }
p { font-size: 16.800px; line-height: 24px; color: #78716c; margin-top: 7px; }
.filterbar { display: flex; align-items: center; height: 50px; margin-top: 29px; }
.funnel { color: #78716c; stroke-width: 1.800; }
.flabel { margin-left: 7.500px; font-size: 16.800px; font-weight: 600; }
.select { margin-left: auto; width: 225px; height: 50px; border: 1px solid #e6e5e4; border-radius: 12px; padding: 0 15px; display: flex; align-items: center; justify-content: space-between; font-size: 16.800px; }
.select .ico { color: #888; stroke-width: 1.800; }
.grid { display: grid; grid-template-columns: 196px 291.500px 218px 143px 100px 1fr; align-items: center; height: 86px; padding: 1px 20px 0; border-bottom: 1px solid #e7e5e4; font-size: 16.800px; }
.grid.head { height: 60px; margin-top: 30px; color: #78716c; font-weight: 600; }
.right { display: flex; justify-content: flex-end; }
.name { font-weight: 600; }
.score { display: flex; align-items: baseline; gap: 5px; }
small { font-size: 14px; color: #78716c; }
.badge { display: inline-flex; align-items: center; height: 27px; padding: 0 13.500px; border-radius: 14px; background: #22c55e; color: #fff; font-size: 14.200px; font-weight: 600; }
.badge.bad { background: #ef4444; }
.actions { gap: 10px; margin-top: -1px; }
.act { margin: 0; height: 45px; border: 1px solid #e7e5e4; border-radius: 12px; background: #fff; box-shadow: 0 1px 2px rgba(0,0,0,.07); font: 600 16.800px "Open Sans", sans-serif; color: #0c0a09; display: flex; align-items: center; padding: 0 14px 0 15px; gap: 15px; flex: none; }
.act .ico { width: 20px; height: 20px; }
.green { color: #22c55e; }
.scrollbar { width: 18px; background: #fbfbfb; display: flex; flex-direction: column; align-items: center; padding: 6px 0 5px; padding-right: 1px; }
.thumb { width: 11px; height: 338px; margin-top: 158px; border-radius: 6px; background: #8b8b8b; }
.scrollbar .end { margin-top: auto; }

.scribble { position: absolute; left: 920px; top: 256px; fill: none; stroke: #ff5500; stroke-width: 5; stroke-linecap: round; stroke-linejoin: round; }

.taskbar { height: 60px; flex: none; background: #d8e2f6; border-top: 1px solid #a9b0be; display: flex; align-items: center; padding-left: 418px; }
.search { margin-left: 17px; width: 273px; height: 39px; border-radius: 20px; background: #f3f6fd; border: 1px solid #c3cce0; border-bottom-color: #a7b2ca; display: flex; align-items: center; padding-left: 13.500px; font-size: 16.500px; color: #55585e; }
.search span { margin-left: 12px; }
.hills { margin-left: auto; margin-right: 2px; }
.apps-row { display: flex; margin-left: 4px; }
.apps-row svg { width: 55px; height: 60px; }
.dot { fill: #7d8492; }
.btxt { font-size: 14px; fill: #fff; text-anchor: middle; font-family: "Open Sans", sans-serif; }
.pale { fill: #eadcf0; font-size: 13px; }
.four { font-size: 16px; }
.xl { font-size: 13px; font-weight: 700; }
.chev { margin-left: 85px; }
.lang { margin-left: 26px; width: 31px; display: flex; flex-direction: column; align-items: center; font-size: 14.500px; line-height: 20px; color: #1b1b1b; }
.wifi { margin-left: 20px; }
.vol { margin-left: 10px; }
.bat { margin-left: 8.500px; }
.clock { width: 97.500px; display: flex; flex-direction: column; align-items: flex-end; font-size: 14.500px; line-height: 20px; color: #1b1b1b; }
.bell { margin-left: 10px; }
</style>
